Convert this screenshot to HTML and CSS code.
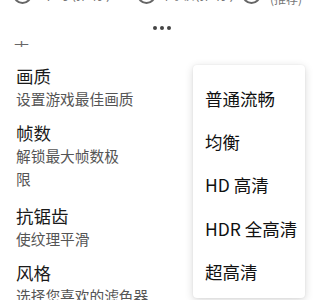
FILE: index.html
```html
<!DOCTYPE html>
<html lang="zh">
<head>
<meta charset="utf-8">
<link rel="stylesheet" href="styles.css">
</head>
<body>
<div class="page">
  <div class="radios">
    <div class="radio"><span class="circle"></span><span class="rlabel">中等(推荐)</span></div>
    <div class="radio"><span class="circle"></span><span class="rlabel">高级(推荐)</span></div>
    <div class="radio r3"><span class="circle"></span><span class="rlabel">极高画质 |<br>(推荐)</span></div>
  </div>
  <div class="handle"><span></span><span></span><span></span></div>
  <div class="cut"><span>丰</span></div>
  <div class="list">
    <div class="item">
      <div class="title">画质</div>
      <div class="desc">设置游戏最佳画质</div>
    </div>
    <div class="item two">
      <div class="title">帧数</div>
      <div class="desc">解锁最大帧数极<br>限</div>
    </div>
    <div class="item">
      <div class="title">抗锯齿</div>
      <div class="desc">使纹理平滑</div>
    </div>
    <div class="item">
      <div class="title">风格</div>
      <div class="desc">选择您喜欢的滤色器</div>
    </div>
  </div>
  <div class="menu">
    <div class="mi">普通流畅</div>
    <div class="mi">均衡</div>
    <div class="mi">HD 高清</div>
    <div class="mi">HDR 全高清</div>
    <div class="mi">超高清</div>
  </div>
</div>
</body>
</html>
```
FILE: styles.css
```css
html, body {
  margin: 0;
  padding: 0;
  background: #fff;
}
body {
  font-family: "Noto Sans CJK SC", "Noto Sans", sans-serif;
  color: #222;
  width: 324px;
  height: 300px;
  overflow: hidden;
}
.page {
  position: relative;
  height: 300px;
  overflow: hidden;
}
.radios {
  display: flex;
  margin-top: -15px;
  height: 20px;
  padding-left: 13px;
}
.radio {
  display: flex;
  align-items: flex-start;
  gap: 9px;
  width: 124px;
  color: #777;
  font-size: 15px;
  line-height: 20px;
}
.radio .rlabel {
  margin-top: -2px;
}
.radio.r3 {
  width: auto;
  margin-left: -18px;
}
.radio.r3 .rlabel {
  line-height: 14px;
  margin-top: -7px;
  font-size: 12px;
  white-space: nowrap;
}
.circle {
  width: 15px;
  height: 15px;
  border: 2px solid #666;
  border-radius: 50%;
  flex: none;
}
.handle {
  display: flex;
  justify-content: center;
  gap: 3px;
  padding-top: 21px;
  height: 7px;
}
.handle span {
  width: 4px;
  height: 4px;
  border-radius: 50%;
  background: #444;
}
.cut {
  height: 6px;
  margin-top: 8px;
  overflow: hidden;
  padding-left: 14px;
  font-size: 15px;
  line-height: 6px;
  color: #666;
}
.cut span {
  display: block;
  margin-top: -6px;
  line-height: 12px;
}
.list {
  padding-left: 16px;
  padding-top: 17px;
}
.item {
  padding-bottom: 11px;
}
.item.two {
  padding-bottom: 14px;
}
.title {
  font-size: 17.5px;
  line-height: 23px;
  color: #1a1a1a;
}
.desc {
  font-size: 14.7px;
  line-height: 23px;
  color: #555;
}
.menu {
  position: absolute;
  left: 193px;
  top: 65px;
  width: 112px;
  box-sizing: border-box;
  padding: 12px 0 5px 12px;
  background: #fff;
  border-radius: 4px;
  box-shadow: 0 2px 8px rgba(0,0,0,0.16), 0 0 2px rgba(0,0,0,0.07);
}
.mi {
  font-size: 17.5px;
  line-height: 43.2px;
  color: #111;
  white-space: nowrap;
}
```
